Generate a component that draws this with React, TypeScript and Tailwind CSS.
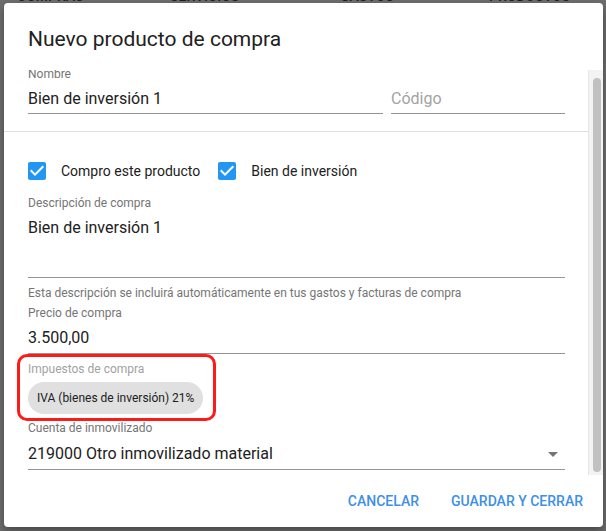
import React from "react";

function CheckBoxIcon() {
  return (
    <svg
      viewBox="0 0 24 24"
      className="-my-[3px] -ml-[3px] h-[24px] w-[24px] shrink-0 fill-[#2196f3]"
    >
      <path d="M19 3H5c-1.11 0-2 .9-2 2v14c0 1.1.89 2 2 2h14c1.11 0 2-.9 2-2V5c0-1.1-.89-2-2-2zm-9 14l-5-5 1.41-1.41L10 14.17l7.59-7.59L19 8l-9 9z" />
    </svg>
  );
}

function Label({ children, light }: { children: React.ReactNode; light?: boolean }) {
  return (
    <div
      className={`text-[12px] leading-[14px] ${light ? "text-[#a2a2a2]" : "text-[#757575]"}`}
    >
      {children}
    </div>
  );
}

export default function App() {
  return (
    <div className="relative h-[531px] w-[606px] overflow-hidden bg-[#6d6d6d] font-['Roboto','Liberation_Sans',sans-serif]">
      {/* page behind the dialog */}
      <div className="-mt-[12px] flex text-[14px] font-medium uppercase leading-[16px] text-[#1e1e1e]">
        <span className="ml-[17px] w-[153px]">Compras</span>
        <span className="w-[170px]">Servicios</span>
        <span className="w-[149px]">Gastos</span>
        <span>Productos</span>
      </div>

      {/* dialog */}
      <div className="absolute inset-0 pl-[4px] pt-[3px]">
        <div className="flex h-[524px] w-[599px] flex-col overflow-hidden rounded-[4px] bg-white shadow-[0_4px_8px_rgba(0,0,0,0.35)]">
          <div className="h-[67px] shrink-0 px-[24px] pt-[24px] text-[21px] leading-[24px] text-[#212121]">
            Nuevo producto de compra
          </div>

          <div className="flex h-[405px] shrink-0">
            <div className="min-w-0 flex-1 overflow-hidden">
              <div className="-mt-[3px]">
                {/* nombre / código */}
                <div className="flex border-b border-[#e0e0e0] pb-[17px] pl-[24px] pr-[23px]">
                  <div className="w-[355px] border-b border-[#949494] pb-[4px]">
                    <Label>Nombre</Label>
                    <div className="mt-[8px] text-[16px] leading-[20px] text-[#212121]">
                      Bien de inversión 1
                    </div>
                  </div>
                  <div className="ml-[8px] flex flex-1 items-end border-b border-[#949494] pb-[4px]">
                    <div className="text-[16px] leading-[20px] text-[#a3a3a3]">Código</div>
                  </div>
                </div>

                <div className="pl-[24px] pr-[23px]">
                  {/* checkboxes */}
                  <div className="mt-[30px] flex h-[18px] items-center text-[14px] text-[#212121]">
                    <CheckBoxIcon />
                    <span className="ml-[12px] mt-[1px]">Compro este producto</span>
                    <span className="ml-[18px] flex items-center">
                      <CheckBoxIcon />
                    </span>
                    <span className="ml-[12px] mt-[1px]">Bien de inversión</span>
                  </div>

                  {/* descripción */}
                  <div className="mt-[16px]">
                    <Label>Descripción de compra</Label>
                    <div className="mt-[8px] h-[60px] border-b border-[#949494] text-[16px] leading-[20px] text-[#212121]">
                      Bien de inversión 1
                    </div>
                    <div className="mt-[8px] text-[12px] leading-[14px] text-[#757575]">
                      Esta descripción se incluirá automáticamente en tus gastos y facturas de compra
                    </div>
                  </div>

                  {/* precio */}
                  <div className="mt-[6px] border-b border-[#949494] pb-[5px]">
                    <Label>Precio de compra</Label>
                    <div className="mt-[8px] text-[16px] leading-[20px] text-[#212121]">3.500,00</div>
                  </div>

                  {/* impuestos */}
                  <div className="relative mt-[8px]">
                    <Label light>Impuestos de compra</Label>
                    <div className="mt-[6px] flex">
                      <span className="flex h-[32px] items-center rounded-full bg-[#e0e0e0] px-[9px] text-[12px] text-[#212121]">
                        IVA (bienes de inversión) 21%
                      </span>
                    </div>
                    <div className="pointer-events-none absolute -left-[11px] -top-[8px] h-[67px] w-[199px] rounded-[10px] border-[3px] border-[#ff1a1a]" />
                  </div>

                  {/* cuenta */}
                  <div className="mt-[7px] border-b border-[#949494] pb-[5px]">
                    <Label>Cuenta de inmovilizado</Label>
                    <div className="mt-[9px] flex items-center justify-between text-[16px] leading-[20px] text-[#212121]">
                      <span>219000 Otro inmovilizado material</span>
                      <svg viewBox="0 0 10 5" className="mr-[7px] h-[5px] w-[10px] fill-[#757575]">
                        <path d="M0 0h10L5 5z" />
                      </svg>
                    </div>
                  </div>
                  <div className="h-[40px]" />
                </div>
              </div>
            </div>

            {/* scrollbar */}
            <div className="w-[15px] shrink-0 border-l border-[#e6e6e6] bg-[#f3f3f3] pl-[4px] pt-[8px]">
              <div className="h-[394px] w-[8px] rounded-full bg-[#c1c1c1]" />
            </div>
          </div>

          {/* actions */}
          <div className="flex flex-1 items-center justify-end gap-[16px] pr-[12px]">
            <button className="h-[36px] px-[8px] text-[14px] font-medium uppercase text-[#3d8fe8]">
              Cancelar
            </button>
            <button className="h-[36px] px-[8px] text-[14px] font-medium uppercase text-[#3d8fe8]">
              Guardar y cerrar
            </button>
          </div>
        </div>
      </div>
    </div>
  );
}
